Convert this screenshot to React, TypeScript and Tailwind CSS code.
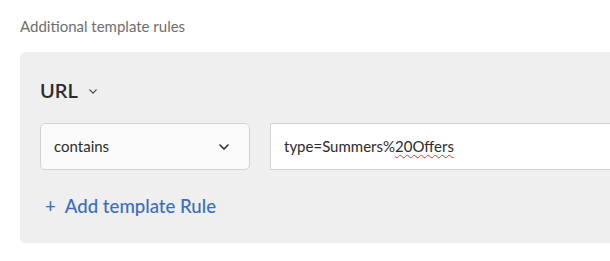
import React from "react";

function Chevron({ className }: { className?: string }) {
  return (
    <svg viewBox="0 0 10 6" className={className} fill="none" stroke="currentColor" strokeWidth="1.6" strokeLinecap="round" strokeLinejoin="round">
      <path d="M1 1l4 4 4-4" />
    </svg>
  );
}

export default function App() {
  return (
    <div className="h-[261px] w-[610px] overflow-hidden bg-white font-['Lato',sans-serif]">
      <div className="w-[640px] pl-5 pt-[15px]">
        <h2 className="text-[15px] leading-[22px] text-[#6e6e6e]">Additional template rules</h2>
        <div className="mt-[15px] h-[191px] rounded-[5px] bg-[#efefef] px-5 pt-[26px]">
          <div className="flex items-center gap-[11px]">
            <span className="text-[20px] font-semibold leading-6 text-[#2c2c2c]">URL</span>
            <Chevron className="mt-[2px] h-[5px] w-[8px] text-[#4b4b4b]" />
          </div>
          <div className="mt-[21px] flex gap-5">
            <button className="flex h-[47px] w-[210px] items-center justify-between rounded-[5px] border border-[#d3d3d3] bg-[#fafafa] pl-[13px] pr-[20px] text-[15px] text-[#2c2c2c]">
              contains
              <Chevron className="h-[6px] w-[10px] text-[#2c2c2c]" />
            </button>
            <div className="flex h-[47px] flex-1 items-center border border-[#d3d3d3] bg-white pl-[13px] text-[15px] text-[#2c2c2c]">
              type=Summers%
              <span className="underline decoration-[#d7373f] decoration-wavy decoration-1 underline-offset-2">20Offers</span>
            </div>
          </div>
          <button className="mt-[23px] flex items-center gap-[9px] pl-[5px] text-[18.6px] font-medium text-[#3a6cc0]">
            <span>+</span>
            <span>Add template Rule</span>
          </button>
        </div>
      </div>
    </div>
  );
}
